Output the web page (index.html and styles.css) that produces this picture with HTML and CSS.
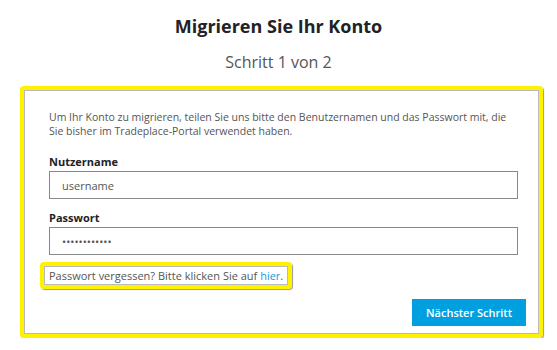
FILE: index.html
```html
<!DOCTYPE html>
<html lang="de">
<head>
    <meta charset="UTF-8">
    <meta name="viewport" content="width=device-width, initial-scale=1.0">
    <title>Konto migrieren</title>
    <link rel="stylesheet" href="styles.css">
</head>
<body>

    <header class="page-head">
        <h1>Migrieren Sie Ihr Konto</h1>
        <p class="step">Schritt 1 von 2</p>
    </header>

    <div class="mark card-mark">
        <main class="card">
            <p class="intro">Um Ihr Konto zu migrieren, teilen Sie uns bitte den Benutzernamen und das Passwort mit, die Sie bisher im Tradeplace-Portal verwendet haben.</p>

            <label for="username">Nutzername</label>
            <input type="text" id="username" value="username">

            <label for="password">Passwort</label>
            <input type="password" id="password" value="passwort1234">

            <div class="forgot-row">
                <div class="mark forgot-mark">
                    <p class="forgot">Passwort vergessen? Bitte klicken Sie auf <a href="#">hier</a>.</p>
                </div>
            </div>

            <div class="actions">
                <button type="button">Nächster Schritt</button>
            </div>
        </main>
    </div>

</body>
</html>
```

FILE: styles.css
```css
body {
    font-family: 'Open Sans', 'Liberation Sans', sans-serif;
    margin: 0;
    padding: 0;
    background-color: #fff;
    color: #333;
}

.page-head {
    text-align: center;
    padding-top: 13px;
}

.page-head h1 {
    margin: 0;
    font-size: 18px;
    font-weight: 700;
    color: #222;
    line-height: 26px;
}

.step {
    margin: 12px 0 0;
    font-size: 16px;
    color: #555;
    line-height: 22px;
}

/* yellow highlight boxes */
.mark {
    border: 4px solid #fff200;
    border-radius: 4px;
    box-shadow: 1px 1px 1px #999;
}

.card-mark {
    margin: 13px 0 0 20px;
    width: 515px;
}

.card {
    border: 1px solid #bbb;
    padding: 19px 20px 7px 24px;
}

.intro {
    margin: 0 0 17px;
    font-size: 10.5px;
    line-height: 14px;
    color: #555;
}

.card label {
    display: block;
    font-size: 11px;
    font-weight: 700;
    color: #222;
    line-height: 14px;
    margin-top: 12px;
    margin-bottom: 2px;
}

.card input {
    display: block;
    width: 100%;
    height: 28px;
    box-sizing: border-box;
    border: 1px solid #888;
    padding: 0 12px;
    font-family: inherit;
    font-size: 11px;
    color: #555;
}

.forgot-row {
    display: flex;
    margin: 7px 0 0 -9px;
}

.forgot {
    margin: 0;
    border: 1px solid #bbb;
    padding: 0 4px;
    font-size: 11px;
    line-height: 17px;
    color: #555;
}

.forgot a {
    color: #1a9ad6;
    text-decoration: none;
}

.actions {
    display: flex;
    justify-content: flex-end;
    margin: 10px -8px 0 0;
}

.actions button {
    background-color: #00a0e0;
    color: #fff;
    border: none;
    width: 114px;
    height: 27px;
    font-family: inherit;
    font-size: 11px;
    font-weight: 600;
    cursor: pointer;
}
```
